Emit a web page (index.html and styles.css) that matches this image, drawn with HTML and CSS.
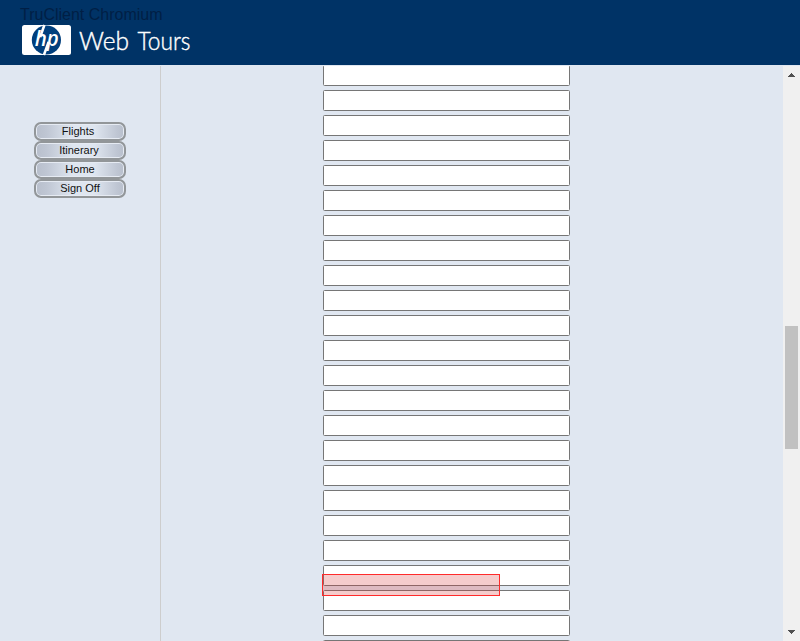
FILE: index.html
```
<!DOCTYPE html>
<html lang="en">
<head>
<meta charset="utf-8">
<title>Web Tours</title>
<link rel="stylesheet" href="styles.css">
</head>
<body>
<header class="header">
  <svg class="brand" width="200" height="65" viewBox="0 0 200 65" role="img" aria-label="hp Web Tours">
    <rect x="22" y="25" width="49" height="30" rx="2.5" fill="#fff"/>
    <ellipse cx="46.4" cy="40" rx="14.6" ry="14.4" fill="#003f7d"/>
    <path d="M44.4 25 L40.2 37 M48.6 42 L43.9 55" stroke="#fff" stroke-width="2.5"/>
    <text class="logo-text" x="34.8" y="46.2" textLength="24" lengthAdjust="spacingAndGlyphs">hp</text>
    <text class="product" x="79" y="50" textLength="50" lengthAdjust="spacingAndGlyphs">Web</text>
    <text class="product" x="137.5" y="50" textLength="53" lengthAdjust="spacingAndGlyphs">Tours</text>
  </svg>
  <div class="client-label">TruClient Chromium</div>
</header>
<div class="content">
  <nav class="sidebar">
    <button class="nav-button">Flights</button>
    <button class="nav-button nudge-1">Itinerary</button>
    <button class="nav-button nudge-2">Home</button>
    <button class="nav-button nudge-2">Sign Off</button>
  </nav>
  <main class="main">
    <form class="fields">
      <input class="field"><input class="field"><input class="field"><input class="field">
      <input class="field"><input class="field"><input class="field"><input class="field">
      <input class="field"><input class="field"><input class="field"><input class="field">
      <input class="field"><input class="field"><input class="field"><input class="field">
      <input class="field"><input class="field"><input class="field"><input class="field">
      <input class="field"><input class="field"><input class="field"><input class="field">
    </form>
    <div class="highlight"></div>
  </main>
  <div class="scrollbar">
    <svg class="arrow" width="7" height="4" viewBox="0 0 7 4" shape-rendering="crispEdges"><path d="M3 0h1v1h1v1h1v1h1v1H0V3h1V2h1V1h1z" fill="#505050"/></svg>
    <div class="track"><div class="thumb"></div></div>
    <svg class="arrow" width="7" height="4" viewBox="0 0 7 4" shape-rendering="crispEdges"><path d="M0 0h7v1H6v1H5v1H4v1H3V3H2V2H1V1H0z" fill="#505050"/></svg>
  </div>
</div>
</body>
</html>
```
FILE: styles.css
```
* { box-sizing: border-box; }
body {
  margin: 0;
  height: 641px;
  overflow: hidden;
  display: flex;
  flex-direction: column;
  background: #e0e7f1;
  font-family: "Liberation Sans", Arial, sans-serif;
}
.header {
  position: relative;
  flex: 0 0 65px;
  background: #003366;
}
.brand { display: block; }
.logo-text {
  font: italic 600 22px "Open Sans", sans-serif;
  fill: #fff;
}
.product {
  font: 300 25px Lato, sans-serif;
  fill: #fff;
  stroke: #fff;
  stroke-width: 0.4px;
}
.client-label {
  position: absolute;
  left: 20px;
  top: 6px;
  font-size: 16px;
  line-height: 18px;
  color: #001f45;
}
.content {
  flex: 1;
  min-height: 0;
  display: flex;
  padding-top: 1px;
}
.sidebar {
  width: 161px;
  padding: 56px 0 0 34px;
  border-right: 1px solid #cdcdcd;
}
.nav-button {
  display: block;
  width: 92px;
  height: 19px;
  padding: 0 4px 0 0;
  border: 2px solid #929699;
  border-radius: 7px;
  background: linear-gradient(90deg, #b8bfcc 0%, #bfc6d3 12%, #dfe6f0 42%, #dfe6f0 66%, #bfc6d3 92%, #b8bfcc 100%);
  box-shadow: inset 0 0 0 1px #e6ebf3;
  color: #111;
  font: 11px/15px "Liberation Sans", Arial, sans-serif;
  text-align: center;
}
.nudge-1 { padding-right: 2px; }
.nudge-2 { padding-right: 0; }
.main {
  position: relative;
  flex: 1;
  overflow: hidden;
}
.fields {
  display: flex;
  flex-direction: column;
  gap: 4px;
  width: 247px;
  margin: -1px 0 0 162px;
}
.field {
  flex: 0 0 21px;
  width: 247px;
  padding: 0 2px;
  border: 1px solid #767676;
  border-radius: 1.5px;
  background: #fff;
}
.highlight {
  position: absolute;
  left: 161px;
  top: 508px;
  width: 178px;
  height: 22px;
  border: 1px solid #ff2b2b;
  background: rgba(215, 50, 50, 0.25);
}
.scrollbar {
  width: 17px;
  padding: 7px 0;
  background: #f0f0f0;
  display: flex;
  flex-direction: column;
  align-items: center;
}
.arrow { display: block; }
.track {
  flex: 1;
  width: 13px;
  padding-top: 249px;
}
.thumb {
  height: 123px;
  background: #c1c1c1;
}
```
